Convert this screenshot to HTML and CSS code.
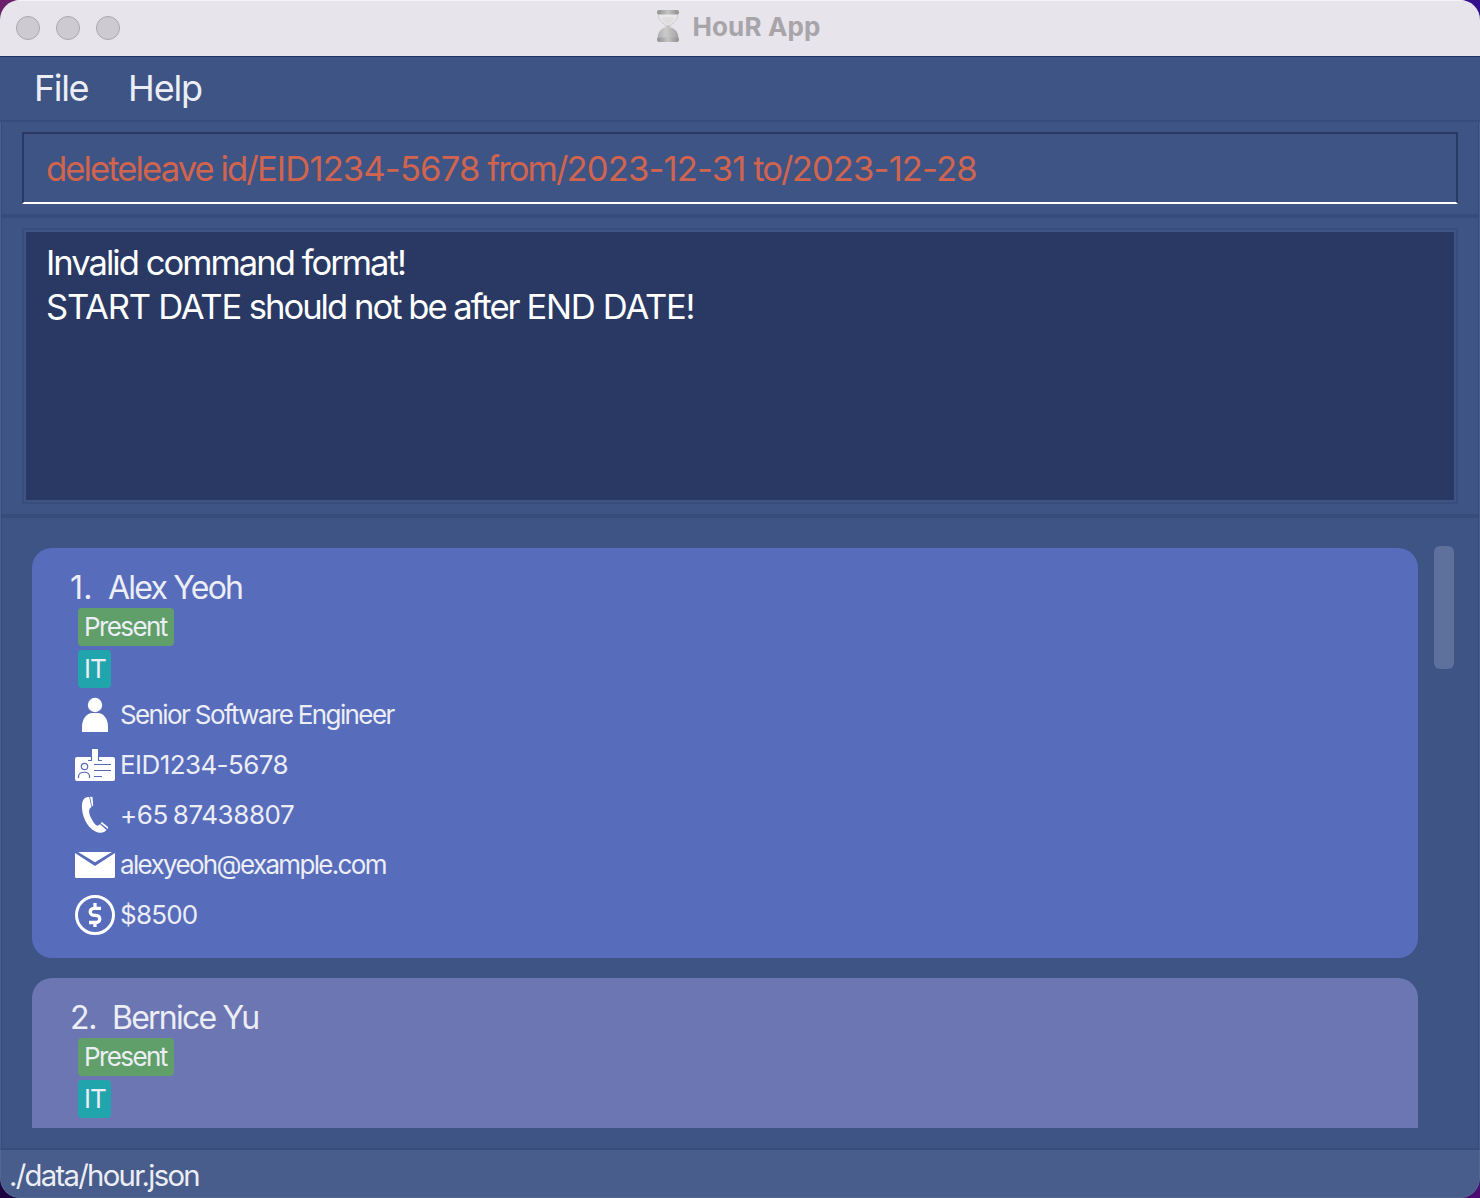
FILE: index.html
```html
<!DOCTYPE html>
<html lang="en">
<head>
<meta charset="utf-8">
<title>HouR App</title>
<link rel="stylesheet" href="styles.css">
</head>
<body>
<svg class="symbols" width="0" height="0">
  <symbol id="person" viewBox="0 0 40 40"><circle cx="20" cy="10" r="7.2"/><path d="M7 37V32C7 23 12.500 18 17 18H23C28 18 33 23 33 32V37Z"/></symbol>
  <symbol id="badge" viewBox="0 0 40 40"><rect x="0" y="12" width="40" height="24" rx="2"/><rect x="17" y="4" width="6" height="11"/><g fill="none" stroke="#566cbb" stroke-width="1.200"><path d="M13 15.500H17M23 15.500H27M16.500 11V15.500M23.500 11V15.500M19 19.500H36M19 25.500H36M19 31.500H27"/><circle cx="9.500" cy="21.500" r="3.200"/><path d="M3.500 33V31C4.500 26 14 26 14.500 31V33"/></g></symbol>
  <symbol id="phone" viewBox="0 0 40 40"><path d="M12.500 2C8 3 6.600 7 7 13C7.500 25 15 35.500 23 37.500C27 38.300 30 37 31.500 35L25 29.300C22 32 20.500 30.500 17.500 25.500C14 19.500 12.500 14.500 16.500 12L14.200 2Z"/><path d="M15 1.800L17.500 2L18.200 10.500L17 11.200ZM25.500 28.200L27 27L33 32V34Z"/></symbol>
  <symbol id="mail" viewBox="0 0 40 40"><path d="M3 7H37L20 17.300Z"/><path d="M0 8L20 21L40 8V31.500Q40 33 38.500 33H1.500Q0 33 0 31.500Z"/></symbol>
  <symbol id="money" viewBox="0 0 40 40"><g fill="none" stroke="#fff"><circle cx="20" cy="20" r="18.500" stroke-width="3"/><path d="M26 13.300H19C14 13.300 14 20.300 19 20.300H21C26 20.300 26 27.500 21 27.500H14M20 8V13M20 27V32" stroke-width="3.300"/></g></symbol>
</svg>
<div class="window">
  <header class="titlebar">
    <div class="lights"><i class="light"></i><i class="light"></i><i class="light"></i></div>
    <div class="title">
      <svg class="hourglass" width="24" height="34" viewBox="0 0 24 34">
        <defs><linearGradient id="metal"><stop offset="0" stop-color="#8f8f8f"/><stop offset=".5" stop-color="#c4c4c4"/><stop offset="1" stop-color="#8d8d8d"/></linearGradient>
        <linearGradient id="sand"><stop offset="0" stop-color="#b0b0b0"/><stop offset=".4" stop-color="#cbcbcb"/><stop offset="1" stop-color="#a2a2a2"/></linearGradient></defs>
        <path d="M2 4Q2 12 9 15.500Q11 17 9 18.500Q2 22 2 30H22Q22 22 15 18.500Q13 17 15 15.500Q22 12 22 4Z" fill="#e9e8e9" stroke="#c5c4c6" stroke-width=".8"/>
        <path d="M5 9Q12 7 19 9Q17 13 12 15.500Q7 13 5 9Z" fill="#dfdedf"/>
        <path d="M10.500 16H13.500L14 18.500Q22 20 22.500 29H1.500Q2 20 10 18.500Z" fill="url(#sand)"/>
        <rect x="1" y="1" width="22" height="4.500" rx="2.200" fill="url(#metal)"/><rect x="1" y="28.500" width="22" height="4.500" rx="2.200" fill="url(#metal)"/>
      </svg>
      <span class="title-text">HouR App</span>
    </div>
  </header>
  <nav class="menubar"><span class="menu file">File</span><span class="menu help">Help</span></nav>
  <main class="content">
    <section class="command-pane"><div class="command"><span class="command-text">deleteleave id/<span class="num">EID1234-5678</span> from/<span class="num">2023-12-31</span> to/<span class="num">2023-12-28</span></span></div></section>
    <section class="result-pane"><div class="result"><div class="message">Invalid command format!<br><span class="caps">START DATE</span> should not be after <span class="caps">END DATE!</span></div></div></section>
    <section class="list-pane">
      <div class="list">
        <article class="card">
          <h2 class="name"><span class="index">1.</span><span class="full-name">Alex Yeoh</span></h2>
          <div class="tag present">Present</div>
          <div class="tag dept">IT</div>
          <div class="row"><svg class="icon"><use href="#person"/></svg><span class="value role">Senior Software Engineer</span></div>
          <div class="row"><svg class="icon"><use href="#badge"/></svg><span class="value eid">EID1234-5678</span></div>
          <div class="row"><svg class="icon"><use href="#phone"/></svg><span class="value tel">+65 87438807</span></div>
          <div class="row"><svg class="icon"><use href="#mail"/></svg><span class="value email">alexyeoh@example.com</span></div>
          <div class="row"><svg class="icon"><use href="#money"/></svg><span class="value salary">$8500</span></div>
        </article>
        <article class="card alt">
          <h2 class="name"><span class="index two">2.</span><span class="full-name">Bernice Yu</span></h2>
          <div class="tag present">Present</div>
          <div class="tag dept">IT</div>
        </article>
      </div>
      <div class="thumb"></div>
    </section>
  </main>
  <footer class="status"><span class="path">./data/hour.json</span></footer>
</div>
</body>
</html>
```
FILE: styles.css
```css
* { box-sizing: border-box; }
body {
  margin: 0;
  width: 1480px;
  height: 1198px;
  overflow: hidden;
  background: linear-gradient(90deg, #6b1f6b 0 50%, #35108c 50%) top / 100% 50% no-repeat,
              linear-gradient(90deg, #1c0540 0 50%, #4b0c74 50%);
  font-family: Inter, "Liberation Sans", sans-serif;
  color: #eceef5;
}
.symbols { display: block; }
.window {
  display: flex;
  flex-direction: column;
  width: 1480px;
  height: 1198px;
  border-radius: 20px;
  overflow: hidden;
  background: #3e5484;
}
.titlebar {
  position: relative;
  display: flex;
  align-items: center;
  justify-content: center;
  height: 57px;
  background: #e7e4eb;
  border-top: 1px solid #f5f4f7;
  border-bottom: 1px solid #1f3161;
}
.lights { position: absolute; left: 16px; top: 15px; display: flex; gap: 16px; }
.light { width: 24px; height: 24px; border-radius: 50%; background: #cdcad1; border: 1px solid #aaa8ad; }
.title { display: flex; align-items: center; height: 52px; gap: 12px; margin-top: -3px; margin-left: -3px; }
.hourglass { display: block; margin-top: -2px; }
.title-text { padding-bottom: 1px; font-size: 26px; font-weight: 700; color: #a7a5aa; letter-spacing: 0.150px; white-space: nowrap; }
.menubar {
  display: flex;
  height: 65px;
  padding: 0 34px;
  gap: 40px;
  border-bottom: 2px solid #374c7b;
  font-size: 36px;
  line-height: 63px;
}
.menu { letter-spacing: -1.200px; white-space: nowrap; }
.file { letter-spacing: -1.400px; }
.content {
  display: flex;
  flex-direction: column;
  height: 1026px;
  border-left: 1px solid #4a5f8d;
  border-right: 1px solid #4a5f8d;
}
.command-pane, .result-pane, .list-pane { border-left: 1px solid #384d7c; border-right: 1px solid #384d7c; }
.command-pane { height: 96px; padding: 10px 20px; border-bottom: 4px solid #374c7b; }
.command {
  height: 72px;
  padding-left: 22px;
  border: 2px solid #293964;
  border-bottom-color: #fff;
  color: #d1644e;
  font-size: 34.600px;
  line-height: 68px;
  white-space: nowrap;
}
.command-text { letter-spacing: -1.900px; }
.num { letter-spacing: -0.850px; }
.result-pane { height: 300px; padding: 10px 20px; border-bottom: 4px solid #374c7b; }
.result { height: 276px; border: 2px solid #384d7c; padding: 2px; }
.message { height: 268px; background: #293964; padding: 8px 20px; font-size: 34.600px; line-height: 44px; color: #fff; letter-spacing: -1.980px; }
.caps { letter-spacing: -1.260px; }
.list-pane { display: flex; gap: 16px; height: 630px; padding: 28px 20px 20px 30px; }
.list { width: 1386px; height: 582px; padding-top: 2px; overflow: hidden; }
.card { height: 410px; margin-bottom: 20px; padding: 20px 38px 0; border-radius: 20px; background: #586cbc; }
.alt { background: #6c76b3; }
.name { display: flex; height: 40px; margin: 0; font-size: 32px; line-height: 39px; font-weight: 400; letter-spacing: -1.780px; white-space: nowrap; }
.index { width: 38px; letter-spacing: 0.300px; }
.two { width: 42px; letter-spacing: -1.300px; }
.tag { width: 96px; height: 38px; margin: 0 0 4px 8px; padding-left: 6px; border-radius: 4px; font-size: 26px; line-height: 38px; letter-spacing: -1.600px; white-space: nowrap; }
.present { background: #609f69; }
.dept { width: 33px; background: #21a5ad; letter-spacing: -1px; }
.row { display: flex; align-items: center; height: 50px; margin-left: 5px; gap: 5px; font-size: 26px; letter-spacing: -1.620px; white-space: nowrap; }
.dept + .row { margin-top: -2px; }
.value { padding-bottom: 1px; }
.eid { letter-spacing: -0.580px; }
.tel { letter-spacing: -0.420px; word-spacing: -2px; }
.email { letter-spacing: -1.670px; }
.salary { letter-spacing: -0.800px; }
.icon { width: 40px; height: 40px; fill: #fff; }
.thumb { width: 20px; height: 123px; border-radius: 6px; background: #5e719d; }
.status {
  height: 50px;
  padding-left: 8px;
  border: 1px solid #52678f;
  border-top: 2px solid #374c7b;
  border-radius: 0 0 20px 20px;
  background: #485d8c;
  font-size: 29.300px;
  line-height: 52px;
}
.path { letter-spacing: -1.720px; }
```
